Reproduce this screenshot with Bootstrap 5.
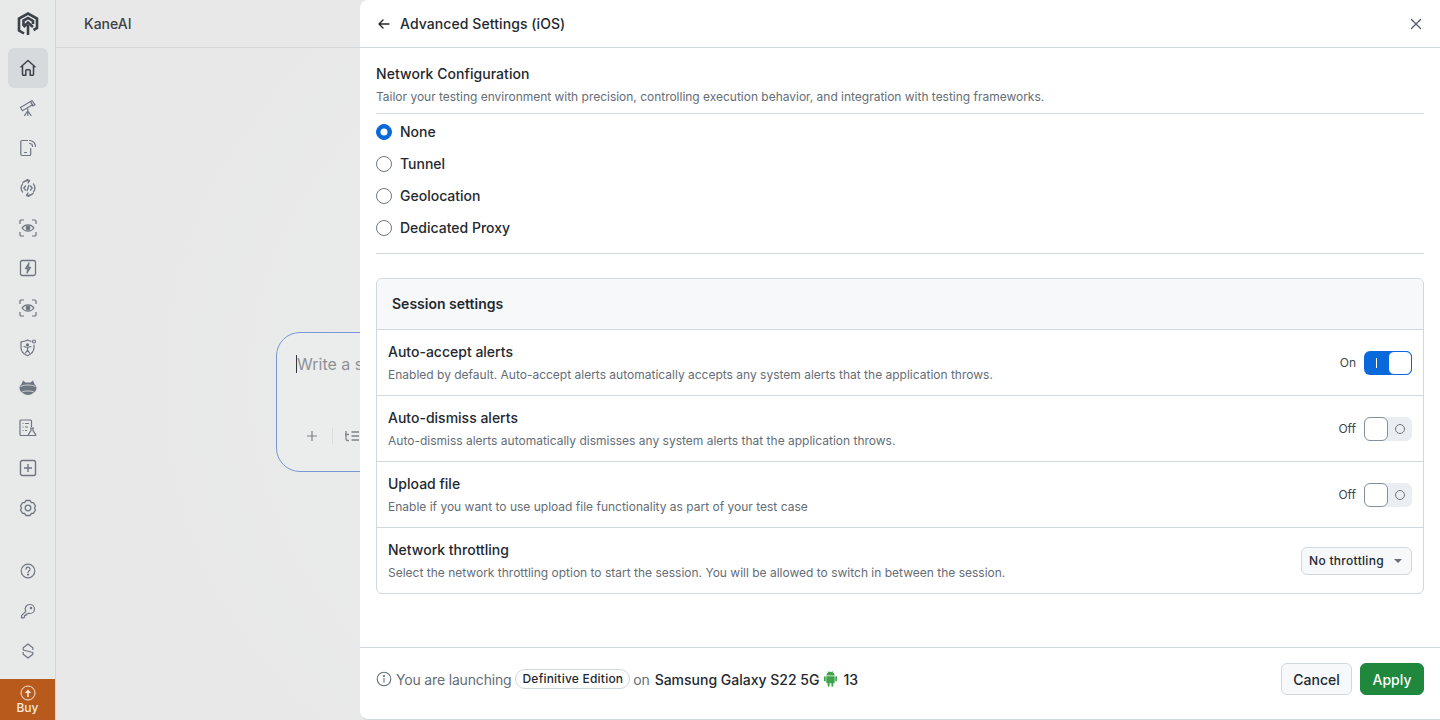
<!DOCTYPE html>
<html lang="en">
<head>
    <meta charset="UTF-8">
    <meta name="viewport" content="width=device-width, initial-scale=1.0">
    <title>KaneAI - Advanced Settings</title>
    <link href="https://cdn.jsdelivr.net/npm/bootstrap@5.3.0/dist/css/bootstrap.min.css" rel="stylesheet">
    <style>
        html, body {
            height: 100%;
            overflow: hidden;
        }
        body {
            font-family: Inter, "Liberation Sans", sans-serif;
            font-size: 14px;
            color: #24292f;
            background-color: #e8e8e8;
        }
        .app-shell {
            height: 720px;
        }
        .side-rail {
            width: 56px;
            flex: 0 0 56px;
            background-color: #e8e9e9;
            border-right: 1px solid #d4d5d6;
        }
        .rail-logo {
            height: 48px;
        }
        .rail-item {
            width: 40px;
            height: 40px;
            margin: 0 auto;
            border-radius: 6px;
            color: #6e7681;
        }
        .rail-item.is-active {
            background-color: #d6dadd;
            color: #3c4249;
        }
        .rail-gap {
            height: 23px;
        }
        .rail-buy {
            height: 41px;
            background-color: #b75a1b;
            color: #f5e9df;
            font-size: 12px;
            font-weight: 500;
            line-height: 14px;
        }
        .top-strip {
            height: 48px;
            padding-left: 28px;
            border-bottom: 1px solid #d7d8d8;
            color: #3e4246;
            font-weight: 500;
        }
        .prompt-area {
            background: radial-gradient(circle at 40% 50%, #ebecec 0, #e8e8e8 60%);
        }
        .prompt-box {
            position: absolute;
            left: 220px;
            top: 332px;
            width: 500px;
            height: 140px;
            border: 1px solid #7b97d3;
            border-radius: 24px;
            padding: 19px 19px;
            background-color: #ebecec;
            color: #8f9296;
            font-size: 16px;
        }
        .prompt-caret {
            display: inline-block;
            width: 1px;
            height: 18px;
            background-color: #33363a;
            vertical-align: -3px;
        }
        .prompt-tools {
            margin-top: 52px;
            margin-left: 10px;
            color: #7f8286;
        }
        .prompt-sep {
            width: 1px;
            height: 16px;
            margin-left: 6px;
            background-color: #dcdddd;
        }
        .prompt-list {
            margin-left: 3px;
        }
        .drawer {
            position: absolute;
            left: 360px;
            top: 0;
            width: 1080px;
            height: 720px;
            background-color: #fff;
            border-top-left-radius: 8px;
            border-bottom-left-radius: 8px;
            border-bottom: 1px solid #d0d7de;
        }
        .drawer-head {
            height: 48px;
            padding: 0 16px;
            border-bottom: 1px solid #d0d7de;
            font-weight: 500;
            letter-spacing: .08px;
        }
        .drawer-body {
            padding: 17px 16px 0;
        }
        .section-title {
            font-weight: 500;
            line-height: 20px;
            margin-top: -1px;
            letter-spacing: .05px;
        }
        .section-note {
            font-size: 12px;
            line-height: 16px;
            color: #656d76;
        }
        .net-desc {
            margin-top: 5px;
            padding-bottom: 8px;
            border-bottom: 1px solid #d0d7de;
            letter-spacing: -.017px;
        }
        .net-options {
            padding: 2px 0 9px;
            border-bottom: 1px solid #d0d7de;
        }
        .net-option {
            height: 32px;
            margin: 0;
            padding: 0;
            font-weight: 500;
        }
        .net-option span {
            margin-top: -2px;
        }
        .net-option .form-check-input {
            float: none;
            width: 16px;
            height: 16px;
            margin: 0;
            border-color: #6e7781;
            box-shadow: none;
        }
        .net-option .form-check-input:checked {
            background-color: #0969da;
            border-color: #0969da;
        }
        .settings-panel {
            margin-top: 24px;
            border: 1px solid #d0d7de;
            border-radius: 6px;
            overflow: hidden;
        }
        .settings-head {
            height: 51px;
            padding: 0 15px 2px;
            background-color: #f6f8fa;
            border-bottom: 1px solid #d0d7de;
            font-weight: 600;
        }
        .settings-row {
            height: 66px;
            padding: 0 11px;
            border-bottom: 1px solid #d0d7de;
        }
        .settings-row:last-child {
            border-bottom: 0;
            height: 65px;
        }
        .row-title {
            font-weight: 500;
            line-height: 20px;
        }
        .row-note {
            margin-top: 5px;
        }
        .switch-label {
            font-size: 12px;
            color: #3d444c;
        }
        .switch-track {
            width: 48px;
            height: 24px;
            border-radius: 6px;
            background-color: #eaeef2;
            position: relative;
        }
        .switch-track.is-on {
            background-color: #0969da;
        }
        .switch-knob {
            position: absolute;
            left: 0;
            top: 0;
            width: 24px;
            height: 24px;
            border: 1px solid #858f99;
            border-radius: 6px;
            background-color: #fff;
        }
        .switch-track.is-on .switch-knob {
            left: 24px;
            border-color: #0969da;
        }
        .mark-on {
            position: absolute;
            left: 12px;
            top: 7px;
            width: 1px;
            height: 10px;
            background-color: #fff;
        }
        .mark-off {
            position: absolute;
            right: 7px;
            top: 7px;
            width: 10px;
            height: 10px;
            border: 1px solid #6e7781;
            border-radius: 50%;
        }
        .throttle-btn {
            width: 111px;
            height: 28px;
            padding: 0 7px;
            font-size: 12px;
            font-weight: 500;
            letter-spacing: .3px;
            color: #24292f;
            background-color: #f6f8fa;
            border: 1px solid #d0d7de;
            border-radius: 6px;
        }
        .throttle-caret {
            width: 0;
            height: 0;
            border-left: 4px solid transparent;
            border-right: 4px solid transparent;
            border-top: 4px solid #656d76;
            margin-right: 2px;
        }
        .drawer-foot {
            position: absolute;
            left: 0;
            right: 0;
            top: 647px;
            height: 72px;
            padding: 15px 16px 0;
            border-top: 1px solid #d0d7de;
        }
        .foot-info {
            height: 32px;
        }
        .foot-muted {
            color: #656d76;
            letter-spacing: -.17px;
        }
        .edition-pill {
            font-size: 12px;
            font-weight: 500;
            letter-spacing: .22px;
            line-height: 18px;
            padding: 0 6px;
            margin: 0 4px;
            border: 1px solid #d0d7de;
            border-radius: 10px;
            color: #24292f;
        }
        .device-name {
            font-weight: 500;
        }
        .android-mark {
            margin: 0 5px 0 4px;
        }
        .on-word {
            margin-left: -1px;
            margin-right: 5px;
        }
        .foot-btn {
            height: 32px;
            padding: 0;
            font-size: 14px;
            font-weight: 500;
            border-radius: 6px;
        }
        .foot-cancel {
            width: 71px;
            background-color: #f6f8fa;
            border: 1px solid #d0d7de;
            color: #24292f;
        }
        .foot-apply {
            width: 64px;
            background-color: #1f883d;
            border: 1px solid #1f883d;
            color: #fff;
        }
    </style>
</head>
<body>
    <div class="app-shell d-flex">
        <nav class="side-rail d-flex flex-column">
            <div class="rail-logo d-flex align-items-center justify-content-center">
                <svg width="22" height="24" viewBox="0 0 22 24" fill="none" stroke="#3c4249" stroke-width="2.6">
                    <path d="M7 21.500 2 18.500V6.500L11 1.500 20 6.500V16l-3.500 2"/>
                    <path d="M6.500 14V8.500L11 6l5 3v3"/>
                    <path d="M11 23V13M6.500 15l4.500-4.500 5 4.500"/>
                </svg>
            </div>
            <a class="rail-item is-active d-flex align-items-center justify-content-center">
                <svg width="18" height="18" viewBox="0 0 18 18" fill="none" stroke="currentColor" stroke-width="1.500" stroke-linejoin="round">
                    <path d="M1.500 8.200 9 1.500l7.500 6.700M3.500 7v8.200c0 .7.500 1.100 1.100 1.100h2.200v-4.500c0-.6.400-1 1-1h2.400c.6 0 1 .4 1 1v4.500h2.200c.6 0 1.100-.4 1.100-1.100V7"/>
                </svg>
            </a>
            <a class="rail-item d-flex align-items-center justify-content-center">
                <svg width="18" height="18" viewBox="0 0 18 18" fill="none" stroke="currentColor" stroke-width="1.200">
                    <path d="m1.500 8.500 10-6 2 3.200-10 6zM11.500 2.700l1.500-1.200 3 4.300-2.200 1.100z"/>
                    <path d="M8.800 9.500V12M8.800 12l-3.500 4.800M8.800 12v5M8.800 12l3.500 4.800"/>
                </svg>
            </a>
            <a class="rail-item d-flex align-items-center justify-content-center">
                <svg width="18" height="18" viewBox="0 0 18 18" fill="none" stroke="currentColor" stroke-width="1.200" stroke-linecap="round">
                    <path d="M8.500 1.500H3a1.200 1.200 0 0 0-1.200 1.200v12.600A1.200 1.200 0 0 0 3 16.500h7.500a1.200 1.200 0 0 0 1.200-1.200V9.500M5.500 13.500h2"/>
                    <path d="M10.500 1.500a6 6 0 0 1 6 6M10.500 4.500a3 3 0 0 1 3 3"/>
                </svg>
            </a>
            <a class="rail-item d-flex align-items-center justify-content-center">
                <svg width="18" height="18" viewBox="0 0 18 18" fill="none" stroke="currentColor" stroke-width="1.300" stroke-linecap="round" stroke-linejoin="round">
                    <path d="M4 3.500a7 7 0 0 1 6.500-1.800M8 .5l2.500 1.200L9 4M14.500 5a7 7 0 0 1 0 8M14 14.500a7 7 0 0 1-6.500 1.800M10 17.500l-2.500-1.200L9 14M3.500 13a7 7 0 0 1 0-8"/>
                    <path d="M6.500 7 4.800 9l1.700 2M11.500 7l1.700 2-1.700 2M9.800 6.500l-1.600 5"/>
                </svg>
            </a>
            <a class="rail-item d-flex align-items-center justify-content-center">
                <svg width="18" height="18" viewBox="0 0 18 18" fill="none" stroke="currentColor" stroke-width="1.200">
                    <path d="M1 5V2a1 1 0 0 1 1-1h3M13 1h3a1 1 0 0 1 1 1v3M17 13v3a1 1 0 0 1-1 1h-3M5 17H2a1 1 0 0 1-1-1v-3"/>
                    <path d="M3 9s2.300-3.200 6-3.200S15 9 15 9s-2.300 3.200-6 3.200S3 9 3 9z"/>
                    <circle cx="9" cy="9" r="1.800" fill="currentColor"/>
                </svg>
            </a>
            <a class="rail-item d-flex align-items-center justify-content-center">
                <svg width="18" height="18" viewBox="0 0 18 18" fill="none" stroke="currentColor" stroke-width="1.300" stroke-linejoin="round">
                    <rect x="1.500" y="1.500" width="15" height="15" rx="1.800"/>
                    <path d="M10 4 6.500 9.500H9L8 14l3.500-5.500H9z"/>
                </svg>
            </a>
            <a class="rail-item d-flex align-items-center justify-content-center">
                <svg width="18" height="18" viewBox="0 0 18 18" fill="none" stroke="currentColor" stroke-width="1.200">
                    <path d="M1 5V2a1 1 0 0 1 1-1h3M13 1h3a1 1 0 0 1 1 1v3M17 13v3a1 1 0 0 1-1 1h-3M5 17H2a1 1 0 0 1-1-1v-3"/>
                    <path d="M3 9s2.300-3.200 6-3.200S15 9 15 9s-2.300 3.200-6 3.200S3 9 3 9z"/>
                    <circle cx="9" cy="9" r="1.800" fill="currentColor"/>
                </svg>
            </a>
            <a class="rail-item d-flex align-items-center justify-content-center">
                <svg width="18" height="18" viewBox="0 0 18 18" fill="none" stroke="currentColor" stroke-width="1.200" stroke-linecap="round">
                    <path d="M12 2.300C10.500 2 9.500 1.500 8.500 1 6.500 2.200 4.500 2.600 2 2.800v6c0 3.700 2.800 6.300 6.500 8 3.700-1.700 6.500-4.300 6.500-8V6"/>
                    <circle cx="8.500" cy="5.800" r="1" fill="currentColor"/>
                    <path d="m5 7.500 3.500 1 3.500-1M8.500 8.500v2.500l-2 3M8.500 11l2 3"/>
                    <circle cx="15" cy="2.500" r="1.500"/>
                </svg>
            </a>
            <a class="rail-item d-flex align-items-center justify-content-center">
                <svg width="18" height="18" viewBox="0 0 18 18" fill="currentColor">
                    <path d="M4 1.500 6.500 3.500h5L14 1.500l1.500 3.500c1.200 1.200 2 2.500 2 4 0 1.800-1 3.500-2.500 4.500-1.600 1.200-3.700 2.500-6 2.500s-4.400-1.300-6-2.500C1.500 12.500.5 10.800.5 9c0-1.500.8-2.800 2-4z"/>
                    <path d="M1.500 7.500c2-1 4-1.500 7.500-1.500s5.500.5 7.500 1.500M3 13c2-.8 3.500-1 6-1s4 .2 6 1" fill="none" stroke="#e8e9e9" stroke-width=".8"/>
                </svg>
            </a>
            <a class="rail-item d-flex align-items-center justify-content-center">
                <svg width="18" height="18" viewBox="0 0 18 18" fill="none" stroke="currentColor" stroke-width="1.200">
                    <path d="M9 16.500H2a1 1 0 0 1-1-1V2a1 1 0 0 1 1-1h9.500a1 1 0 0 1 1 1v6"/>
                    <path d="M3.500 4.500h1M6 4.500h4M3.500 8h1M6 8h3M3.500 11.500h1M6 11.500h2"/>
                    <path d="M12 9v2.500l-2.800 4.300a.5.500 0 0 0 .4.700h6.800a.5.500 0 0 0 .4-.7L14 11.500V9M11 9h4"/>
                </svg>
            </a>
            <a class="rail-item d-flex align-items-center justify-content-center">
                <svg width="18" height="18" viewBox="0 0 18 18" fill="none" stroke="currentColor" stroke-width="1.400">
                    <rect x="1.500" y="1.500" width="15" height="15" rx="1.800"/>
                    <path d="M9 5v8M5 9h8"/>
                </svg>
            </a>
            <a class="rail-item d-flex align-items-center justify-content-center">
                <svg width="18" height="18" viewBox="0 0 18 18" fill="none" stroke="currentColor" stroke-width="1.300" stroke-linejoin="round">
                    <path d="M6.800 1.500h4.400l1 2 2.200.2 2.100 3.300-1.100 2 1.100 2-2.100 3.300-2.200.2-1 2H6.800l-1-2-2.200-.2L1.500 11l1.100-2-1.100-2 2.100-3.300 2.200-.2z"/>
                    <circle cx="9" cy="9" r="2.800"/>
                </svg>
            </a>
            <div class="rail-gap"></div>
            <a class="rail-item d-flex align-items-center justify-content-center">
                <svg width="16" height="16" viewBox="0 0 16 16" fill="none" stroke="currentColor" stroke-width="1.200" stroke-linecap="round">
                    <circle cx="8" cy="8" r="6.800"/>
                    <path d="M6 6.200a2 2 0 1 1 3 1.700c-.6.400-1 .8-1 1.500"/>
                    <circle cx="8" cy="11.600" r=".5" fill="currentColor"/>
                </svg>
            </a>
            <a class="rail-item d-flex align-items-center justify-content-center">
                <svg width="16" height="16" viewBox="0 0 16 16" fill="none" stroke="currentColor" stroke-width="1.200" stroke-linejoin="round">
                    <path d="M10 1.500a4.500 4.500 0 0 1 0 9c-.6 0-1-.1-1.500-.3L7.500 11H6v1.500H4.500V14l-.8.800H1.500v-2.200l4.300-4.300A4.500 4.500 0 0 1 10 1.500z"/>
                    <circle cx="11" cy="5" r=".7" fill="currentColor"/>
                </svg>
            </a>
            <a class="rail-item d-flex align-items-center justify-content-center">
                <svg width="16" height="16" viewBox="0 0 16 16" fill="none" stroke="currentColor" stroke-width="1.200" stroke-linejoin="round">
                    <path d="M12.800 7V4.800L8 1 3.200 4.800V7l9.600 2.500v1.700L8 15l-4.800-3.800V9"/>
                </svg>
            </a>
            <div class="flex-grow-1"></div>
            <a class="rail-buy text-decoration-none d-flex flex-column align-items-center justify-content-center">
                <svg width="16" height="16" viewBox="0 0 16 16" fill="none" stroke="currentColor" stroke-width="1">
                    <circle cx="8" cy="8" r="7"/>
                    <path d="M8 12V7" stroke-width="1.600"/>
                    <path d="M4.800 8 8 4.500 11.200 8z" fill="currentColor" stroke="none"/>
                </svg>
                <span>Buy</span>
            </a>
        </nav>
        <main class="flex-grow-1 d-flex flex-column position-relative">
            <div class="top-strip d-flex align-items-center">KaneAI</div>
            <div class="prompt-area flex-grow-1">
                <div class="prompt-box">
                    <div><span class="prompt-caret"></span>Write a s</div>
                    <div class="prompt-tools d-flex align-items-center gap-2">
                        <svg width="12" height="12" viewBox="0 0 12 12" fill="none" stroke="currentColor" stroke-width="1.200"><path d="M6 1v10M1 6h10"/></svg>
                        <span class="prompt-sep"></span>
                        <svg class="prompt-list" width="16" height="12" viewBox="0 0 16 12" fill="none" stroke="currentColor" stroke-width="1.300"><path d="M2 1v8c0 1 .5 1.500 1.500 1.500H5M1 4.500h4M7.500 2H15M7.500 6H15M7.500 10H15"/></svg>
                    </div>
                </div>
            </div>
        </main>
    </div>

    <section class="drawer">
        <header class="drawer-head d-flex align-items-center">
            <svg class="me-2" width="16" height="16" viewBox="0 0 16 16" fill="none" stroke="#24292f" stroke-width="1.400" stroke-linecap="round" stroke-linejoin="round">
                <path d="M13 8H3M7 4 3 8l4 4"/>
            </svg>
            <span>Advanced Settings (iOS)</span>
            <svg class="ms-auto" width="16" height="16" viewBox="0 0 16 16" fill="none" stroke="#57606a" stroke-width="1.400" stroke-linecap="round">
                <path d="m3.500 3.500 9 9M12.500 3.500l-9 9"/>
            </svg>
        </header>

        <div class="drawer-body">
            <div class="section-title">Network Configuration</div>
            <div class="section-note net-desc">Tailor your testing environment with precision, controlling execution behavior, and integration with testing frameworks.</div>
            <div class="net-options">
                <label class="net-option form-check d-flex align-items-center gap-2">
                    <input class="form-check-input" type="radio" name="network" checked>
                    <span>None</span>
                </label>
                <label class="net-option form-check d-flex align-items-center gap-2">
                    <input class="form-check-input" type="radio" name="network">
                    <span>Tunnel</span>
                </label>
                <label class="net-option form-check d-flex align-items-center gap-2">
                    <input class="form-check-input" type="radio" name="network">
                    <span>Geolocation</span>
                </label>
                <label class="net-option form-check d-flex align-items-center gap-2">
                    <input class="form-check-input" type="radio" name="network">
                    <span>Dedicated Proxy</span>
                </label>
            </div>

            <div class="settings-panel">
                <div class="settings-head d-flex align-items-center">Session settings</div>
                <div class="settings-row d-flex align-items-center justify-content-between">
                    <div>
                        <div class="row-title">Auto-accept alerts</div>
                        <div class="section-note row-note">Enabled by default. Auto-accept alerts automatically accepts any system alerts that the application throws.</div>
                    </div>
                    <div class="d-flex align-items-center gap-2">
                        <span class="switch-label">On</span>
                        <span class="switch-track is-on"><span class="mark-on"></span><span class="switch-knob"></span></span>
                    </div>
                </div>
                <div class="settings-row d-flex align-items-center justify-content-between">
                    <div>
                        <div class="row-title">Auto-dismiss alerts</div>
                        <div class="section-note row-note">Auto-dismiss alerts automatically dismisses any system alerts that the application throws.</div>
                    </div>
                    <div class="d-flex align-items-center gap-2">
                        <span class="switch-label">Off</span>
                        <span class="switch-track"><span class="mark-off"></span><span class="switch-knob"></span></span>
                    </div>
                </div>
                <div class="settings-row d-flex align-items-center justify-content-between">
                    <div>
                        <div class="row-title">Upload file</div>
                        <div class="section-note row-note">Enable if you want to use upload file functionality as part of your test case</div>
                    </div>
                    <div class="d-flex align-items-center gap-2">
                        <span class="switch-label">Off</span>
                        <span class="switch-track"><span class="mark-off"></span><span class="switch-knob"></span></span>
                    </div>
                </div>
                <div class="settings-row d-flex align-items-center justify-content-between">
                    <div>
                        <div class="row-title">Network throttling</div>
                        <div class="section-note row-note">Select the network throttling option to start the session. You will be allowed to switch in between the session.</div>
                    </div>
                    <button class="throttle-btn d-flex align-items-center justify-content-between" type="button">
                        <span>No throttling</span>
                        <span class="throttle-caret"></span>
                    </button>
                </div>
            </div>
        </div>

        <footer class="drawer-foot d-flex align-items-start justify-content-between">
            <div class="foot-info d-flex align-items-center">
                <svg class="me-1" width="16" height="16" viewBox="0 0 16 16" fill="none" stroke="#656d76" stroke-width="1.100" stroke-linecap="round">
                    <circle cx="8" cy="8" r="6.800"/>
                    <path d="M8 7.500v3.500"/>
                    <circle cx="8" cy="5" r=".5" fill="#656d76"/>
                </svg>
                <span class="foot-muted">You are launching</span>
                <span class="edition-pill">Definitive Edition</span>
                <span class="foot-muted on-word">on</span>
                <span class="device-name">Samsung Galaxy S22 5G</span>
                <svg class="android-mark" width="15" height="18" viewBox="0 0 16 18" fill="#3da34d">
                    <path d="M3.500 6h9v6.500a1 1 0 0 1-1 1H11V16.200a1 1 0 0 1-2 0V13.500H7V16.200a1 1 0 0 1-2 0V13.500h-.5a1 1 0 0 1-1-1z"/>
                    <path d="M3.500 5.300a4.500 4.500 0 0 1 2.200-3.400L5 .8l.4-.3.800 1.100a4.500 4.500 0 0 1 3.600 0l.8-1.100.4.300-.7 1.100a4.500 4.500 0 0 1 2.200 3.400z"/>
                    <rect x="1" y="6" width="1.900" height="5.500" rx=".95"/>
                    <rect x="13.100" y="6" width="1.900" height="5.500" rx=".95"/>
                </svg>
                <span class="device-name">13</span>
            </div>
            <div class="d-flex gap-2">
                <button class="btn foot-btn foot-cancel" type="button">Cancel</button>
                <button class="btn foot-btn foot-apply" type="button">Apply</button>
            </div>
        </footer>
    </section>

    <script src="https://cdn.jsdelivr.net/npm/bootstrap@5.3.0/dist/js/bootstrap.bundle.min.js"></script>
</body>
</html>
